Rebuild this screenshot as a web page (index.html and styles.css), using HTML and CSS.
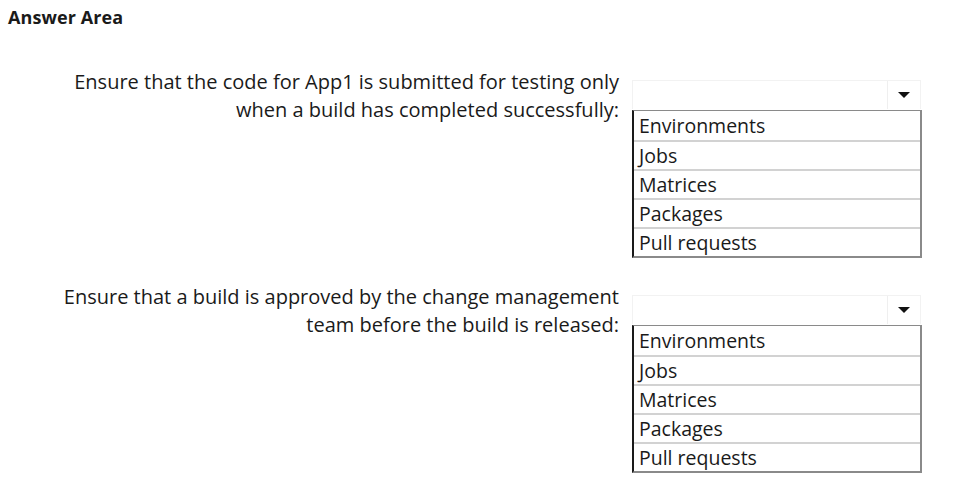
FILE: index.html
```html
<!DOCTYPE html>
<html lang="en">
<head>
    <meta charset="UTF-8">
    <title>Answer Area</title>
    <link rel="stylesheet" href="styles.css">
</head>
<body>
    <h1 class="titulo">Answer Area</h1>

    <div class="pregunta pregunta-uno">
        <div class="enunciado">
            Ensure that the code for App1 is submitted for testing only<br>
            when a build has completed successfully:
        </div>
        <div class="control">
            <div class="cabecera">
                <span class="flecha"></span>
            </div>
            <ul class="opciones">
                <li>Environments</li>
                <li>Jobs</li>
                <li>Matrices</li>
                <li>Packages</li>
                <li>Pull requests</li>
            </ul>
        </div>
    </div>

    <div class="pregunta pregunta-dos">
        <div class="enunciado">
            Ensure that a build is approved by the change management<br>
            team before the build is released:
        </div>
        <div class="control">
            <div class="cabecera">
                <span class="flecha"></span>
            </div>
            <ul class="opciones">
                <li>Environments</li>
                <li>Jobs</li>
                <li>Matrices</li>
                <li>Packages</li>
                <li>Pull requests</li>
            </ul>
        </div>
    </div>
</body>
</html>
```

FILE: styles.css
```css
body {
    margin: 0;
    padding: 0;
    background-color: #ffffff;
    color: #1a1a1a;
    font-family: "Open Sans", "Noto Sans", sans-serif;
}

.titulo {
    margin: 0;
    padding: 5px 0 0 8px;
    font-size: 18px;
    font-weight: bold;
    letter-spacing: 0.1px;
    line-height: 24px;
}

.pregunta {
    display: flex;
    gap: 13px;
}

.pregunta-uno {
    margin-top: 37px;
}

.pregunta-dos {
    margin-top: 23px;
}

.enunciado {
    width: 619px;
    text-align: right;
    font-size: 20px;
    line-height: 28px;
    padding-top: 2px;
}

.control {
    width: 290px;
    padding-top: 14px;
}

.cabecera {
    height: 28px;
    border: 1px solid #f2f2f2;
    border-bottom: none;
    display: flex;
    justify-content: flex-end;
    align-items: center;
    margin-right: 1px;
}

.flecha {
    width: 32px;
    height: 28px;
    border-left: 1px solid #efefef;
    display: flex;
    justify-content: center;
    align-items: center;
}

.flecha::after {
    content: "";
    border-style: solid;
    border-width: 6px 6px 0;
    border-color: #111 transparent transparent;
}

.opciones {
    list-style: none;
    margin: 1px 0 0;
    padding: 0;
    border: 2px solid #8a8a8a;
    border-left-color: #1a1a1a;
    border-top-width: 1px;
}

.opciones li {
    height: 27px;
    padding-left: 5px;
    font-size: 19.5px;
    line-height: 28px;
    border-top: 2px solid #d2d2d2;
}

.opciones li:first-child {
    border-top: none;
    height: 29px;
    line-height: 30px;
}
```
